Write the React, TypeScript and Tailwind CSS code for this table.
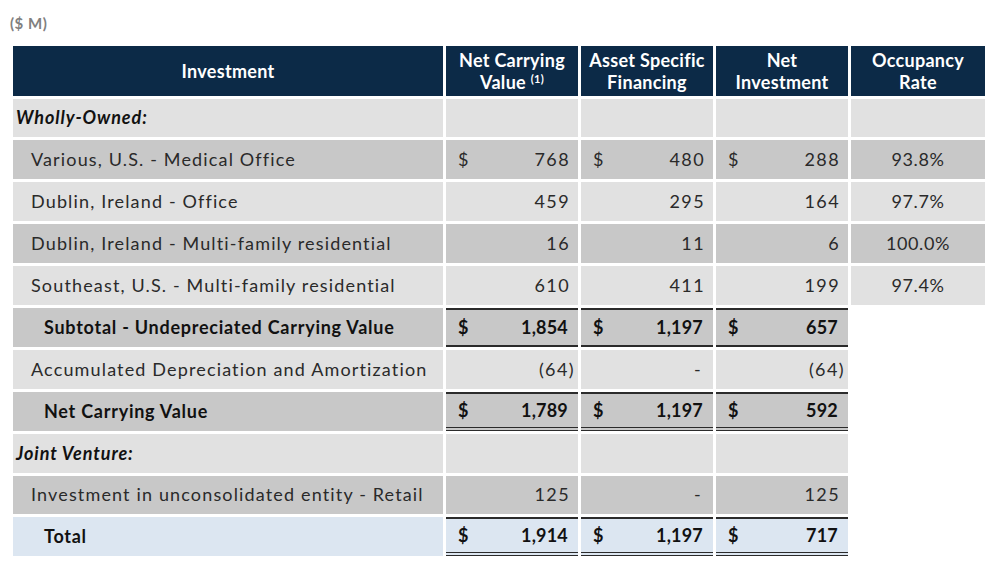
const font = { fontFamily: "Lato, 'DejaVu Sans', sans-serif" };

type Kind = "section" | "item" | "subtotal" | "plain" | "total";

type Row = {
  label: string;
  kind: Kind;
  tone: "light" | "dark" | "blue";
  vals?: [string, string, string];
  dollar?: boolean;
  occ?: string;
  occCell?: boolean;
  top?: boolean;
  bottom?: "single" | "double";
};

const rows: Row[] = [
  { label: "Wholly-Owned:", kind: "section", tone: "light", occCell: true },
  { label: "Various, U.S. - Medical Office", kind: "item", tone: "dark", vals: ["768", "480", "288"], dollar: true, occ: "93.8%", occCell: true },
  { label: "Dublin, Ireland - Office", kind: "item", tone: "light", vals: ["459", "295", "164"], occ: "97.7%", occCell: true },
  { label: "Dublin, Ireland - Multi-family residential", kind: "item", tone: "dark", vals: ["16", "11", "6"], occ: "100.0%", occCell: true },
  { label: "Southeast, U.S. - Multi-family residential", kind: "item", tone: "light", vals: ["610", "411", "199"], occ: "97.4%", occCell: true },
  { label: "Subtotal - Undepreciated Carrying Value", kind: "subtotal", tone: "dark", vals: ["1,854", "1,197", "657"], dollar: true, top: true, bottom: "single" },
  { label: "Accumulated Depreciation and Amortization", kind: "plain", tone: "light", vals: ["(64)", "-", "(64)"] },
  { label: "Net Carrying Value", kind: "subtotal", tone: "dark", vals: ["1,789", "1,197", "592"], dollar: true, top: true, bottom: "double" },
  { label: "Joint Venture:", kind: "section", tone: "light", vals: ["", "", ""] },
  { label: "Investment in unconsolidated entity - Retail", kind: "plain", tone: "dark", vals: ["125", "-", "125"] },
  { label: "Total", kind: "total", tone: "blue", vals: ["1,914", "1,197", "717"], dollar: true, top: true, bottom: "double" },
];

const toneBg = {
  light: "bg-[#e1e1e1]",
  dark: "bg-[#c8c8c8]",
  blue: "bg-[#dce6f1]",
};

function Head({ children }: { children: React.ReactNode }) {
  return (
    <div className="flex h-[50px] flex-col items-center justify-center bg-[#0c2a47] text-center text-[18px] font-bold leading-[22px] tracking-[0.3px] text-white">
      {children}
    </div>
  );
}

function Value({ row, v }: { row: Row; v: string }) {
  const bold = row.kind === "subtotal" || row.kind === "total";
  const border = [
    row.top ? "border-t-2 border-t-[#2b2b2b]" : "",
    row.bottom === "single" ? "border-b-2 border-b-[#2b2b2b]" : "",
    row.bottom === "double" ? "border-b-4 border-double border-b-[#2b2b2b]" : "",
  ].join(" ");
  const neg = v.startsWith("(");
  const dash = v === "-";
  return (
    <div
      className={`flex h-[38.9px] items-center justify-between pl-[12px] ${toneBg[row.tone]} ${border} ${
        bold ? "font-bold text-[#111] tracking-[0.2px] pr-[10px]" : "text-[#2a2a2a] tracking-[1.4px]"
      } ${!bold ? (neg ? "pr-[3px]" : dash ? "pr-[11px]" : "pr-[8px]") : ""} text-[18px]`}
    >
      <span>{row.dollar ? "$" : ""}</span>
      <span>{v}</span>
    </div>
  );
}

export default function App() {
  return (
    <div className="min-h-[568px] w-[1000px] bg-white" style={font}>
      <div className="pl-[10px] pt-[12px] text-[15px] font-bold tracking-[0.5px] text-[#808080]">($ M)</div>
      <div className="ml-[13px] mt-[11px] grid grid-cols-[430px_132px_132px_132px_134px] gap-x-[3px] gap-y-[3px]">
        <Head>Investment</Head>
        <Head>
          <span>Net Carrying</span>
          <span>
            Value <sup className="text-[11px]">(1)</sup>
          </span>
        </Head>
        <Head>
          <span>Asset Specific</span>
          <span>Financing</span>
        </Head>
        <Head>
          <span>Net</span>
          <span>Investment</span>
        </Head>
        <Head>
          <span>Occupancy</span>
          <span>Rate</span>
        </Head>
        {rows.map((r) => (
          <div key={r.label} className="contents">
            <div
              className={`flex h-[38.9px] items-center text-[18px] ${toneBg[r.tone]} ${
                r.kind === "section"
                  ? "pl-[3px] font-bold italic tracking-[0.9px] text-[#111]"
                  : r.kind === "item" || r.kind === "plain"
                  ? "pl-[18px] tracking-[1.15px] text-[#2a2a2a]"
                  : "pl-[31px] font-bold tracking-[0.75px] text-[#111]"
              }`}
            >
              {r.label}
            </div>
            {r.vals ? (
              r.vals.map((v, i) => <Value key={i} row={r} v={v} />)
            ) : (
              <>
                <div className={`h-[38.9px] ${toneBg[r.tone]}`} />
                <div className={`h-[38.9px] ${toneBg[r.tone]}`} />
                <div className={`h-[38.9px] ${toneBg[r.tone]}`} />
              </>
            )}
            {r.occCell ? (
              <div className={`flex h-[38.9px] items-center justify-center text-[18px] tracking-[0.6px] text-[#2a2a2a] ${toneBg[r.tone]}`}>
                {r.occ}
              </div>
            ) : (
              <div />
            )}
          </div>
        ))}
      </div>
    </div>
  );
}
